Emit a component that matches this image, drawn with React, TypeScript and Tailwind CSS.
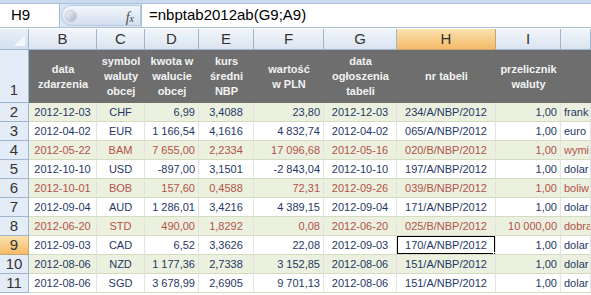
import React from 'react'

const cols = [
  { key: 'B', w: 'w-[68px]' },
  { key: 'C', w: 'w-[48px]' },
  { key: 'D', w: 'w-[54px]' },
  { key: 'E', w: 'w-[55px]' },
  { key: 'F', w: 'w-[70px]' },
  { key: 'G', w: 'w-[73px]' },
  { key: 'H', w: 'w-[99px]' },
  { key: 'I', w: 'w-[65px]' },
  { key: 'J', w: 'w-[30px]' },
]

const align = [
  'justify-center',
  'justify-center',
  'justify-end pr-[3px]',
  'justify-center',
  'justify-end pr-[3px]',
  'justify-center',
  'justify-center',
  'justify-end pr-[3px]',
  'justify-start pl-[3px]',
]

const headers = [
  ['data', 'zdarzenia'],
  ['symbol', 'waluty', 'obcej'],
  ['kwota w', 'walucie', 'obcej'],
  ['kurs', 'średni', 'NBP'],
  ['wartość', 'w PLN'],
  ['data', 'ogłoszenia', 'tabeli'],
  ['nr tabeli'],
  ['przelicznik', 'waluty'],
  [],
]

const rows = [
  { n: 2, red: false, c: ['2012-12-03', 'CHF', '6,99', '3,4088', '23,80', '2012-12-03', '234/A/NBP/2012', '1,00', 'frank'] },
  { n: 3, red: false, c: ['2012-04-02', 'EUR', '1 166,54', '4,1616', '4 832,74', '2012-04-02', '065/A/NBP/2012', '1,00', 'euro'] },
  { n: 4, red: true, c: ['2012-05-22', 'BAM', '7 655,00', '2,2334', '17 096,68', '2012-05-16', '020/B/NBP/2012', '1,00', 'wymi'] },
  { n: 5, red: false, c: ['2012-10-10', 'USD', '-897,00', '3,1501', '-2 843,04', '2012-10-10', '197/A/NBP/2012', '1,00', 'dolar'] },
  { n: 6, red: true, c: ['2012-10-01', 'BOB', '157,60', '0,4588', '72,31', '2012-09-26', '039/B/NBP/2012', '1,00', 'boliw'] },
  { n: 7, red: false, c: ['2012-09-04', 'AUD', '1 286,01', '3,4216', '4 389,15', '2012-09-04', '171/A/NBP/2012', '1,00', 'dolar'] },
  { n: 8, red: true, c: ['2012-06-20', 'STD', '490,00', '1,8292', '0,08', '2012-06-20', '025/B/NBP/2012', '10 000,00', 'dobra'] },
  { n: 9, red: false, c: ['2012-09-03', 'CAD', '6,52', '3,3626', '22,08', '2012-09-03', '170/A/NBP/2012', '1,00', 'dolar'] },
  { n: 10, red: false, c: ['2012-08-06', 'NZD', '1 177,36', '2,7338', '3 152,85', '2012-08-06', '151/A/NBP/2012', '1,00', 'dolar'] },
  { n: 11, red: false, c: ['2012-08-06', 'SGD', '3 678,99', '2,6905', '9 701,13', '2012-08-06', '151/A/NBP/2012', '1,00', 'dolar'] },
]

export default function App() {
  return (
    <div className="w-[591px] h-[295px] overflow-hidden bg-white font-['Liberation_Sans',Arial,sans-serif]">
      {/* formula bar */}
      <div className="h-[4px] bg-[#c9daef] border-b border-[#a9c1de]" />
      <div className="flex h-[24px] bg-[#dbe6f4] border-b border-[#a9bfd8]">
        <div className="w-[60px] bg-white border-r border-[#a9bfd8] flex items-center pl-[11px] text-[15px] text-black">H9</div>
        <div className="relative w-[80px] flex items-center rounded-l-[12px] bg-gradient-to-b from-[#f3f7fc] to-[#d3dfee] border border-[#b6c9e0] ml-[1px] my-[1px]">
          <div className="absolute left-[3px] top-[4px] w-[12px] h-[12px] rounded-full bg-gradient-to-br from-[#f6f8fb] to-[#a8b6c6] border border-[#c2ccd8]" />
          <span className="absolute right-[6px] top-[1px] font-['Liberation_Serif',serif] italic text-[14px] text-[#444]">
            f<span className="text-[10px]">x</span>
          </span>
        </div>
        <div className="flex-1 bg-white border-l border-[#a9bfd8] flex items-center pl-[7px] text-[15px] text-black">=nbptab2012ab(G9;A9)</div>
      </div>

      {/* column letters */}
      <div className="flex h-[21px] mt-[1px]">
        <div className="relative w-[29px] bg-gradient-to-b from-[#e8eff8] to-[#d4e0ef] border-r border-b border-[#9eb6ce]">
          <div className="absolute right-[3px] bottom-[3px] w-0 h-0 border-l-[11px] border-l-transparent border-b-[11px] border-b-[#f4f7fb]" />
        </div>
        {cols.map((c) => (
          <div
            key={c.key}
            className={`${c.w} flex items-center justify-center text-[15px] border-r border-b ${
              c.key === 'H'
                ? 'bg-gradient-to-b from-[#fbe1ae] to-[#f4bb68] border-[#c9a56b] text-[#333]'
                : 'bg-gradient-to-b from-[#f2f6fb] to-[#dae4f0] border-[#9eb6ce] text-[#333]'
            }`}
          >
            {c.key === 'J' ? '' : c.key}
          </div>
        ))}
      </div>

      {/* header row 1 */}
      <div className="flex h-[53px]">
        <div className="w-[29px] bg-[#e4ecf7] border-r border-b border-[#9eb6ce] flex items-end justify-center text-[15px] text-[#333] pb-[1px]">1</div>
        {cols.map((c, i) => (
          <div key={c.key} className={`${c.w} bg-[#6e6e6e] flex flex-col items-center justify-center text-[11px] leading-[15px] font-bold text-[#f2f2f2] text-center`}>
            {headers[i].map((l) => (
              <span key={l} className="whitespace-nowrap">{l}</span>
            ))}
          </div>
        ))}
      </div>

      {/* data rows */}
      {rows.map((r, ri) => (
        <div key={r.n} className="flex h-[19px]">
          <div
            className={`w-[29px] border-r border-b flex items-center justify-center text-[15px] ${
              r.n === 9 ? 'bg-gradient-to-b from-[#fbe1ae] to-[#f4bb68] border-[#c9a56b] text-[#333]' : 'bg-[#e4ecf7] border-[#9eb6ce] text-[#333]'
            }`}
          >
            {r.n}
          </div>
          {cols.map((c, i) => (
            <div
              key={c.key}
              className={`relative ${c.w} flex items-center overflow-hidden whitespace-nowrap text-[11px] border-r border-b border-r-[#e1e4e0] border-b-[#d3dcc0] ${align[i]} ${
                ri % 2 === 0 ? 'bg-[#ebf1de]' : 'bg-white'
              } ${r.red ? 'text-[#b5524a]' : 'text-[#1f3866]'}`}
            >
              {r.c[i]}
              {r.n === 9 && c.key === 'H' && (
                <>
                  <div className="absolute -left-[1px] -top-[1px] -right-[1px] -bottom-[1px] border-2 border-black" />
                  <div className="absolute -right-[3px] -bottom-[3px] w-[5px] h-[5px] bg-black border border-white" />
                </>
              )}
            </div>
          ))}
        </div>
      ))}
    </div>
  )
}
